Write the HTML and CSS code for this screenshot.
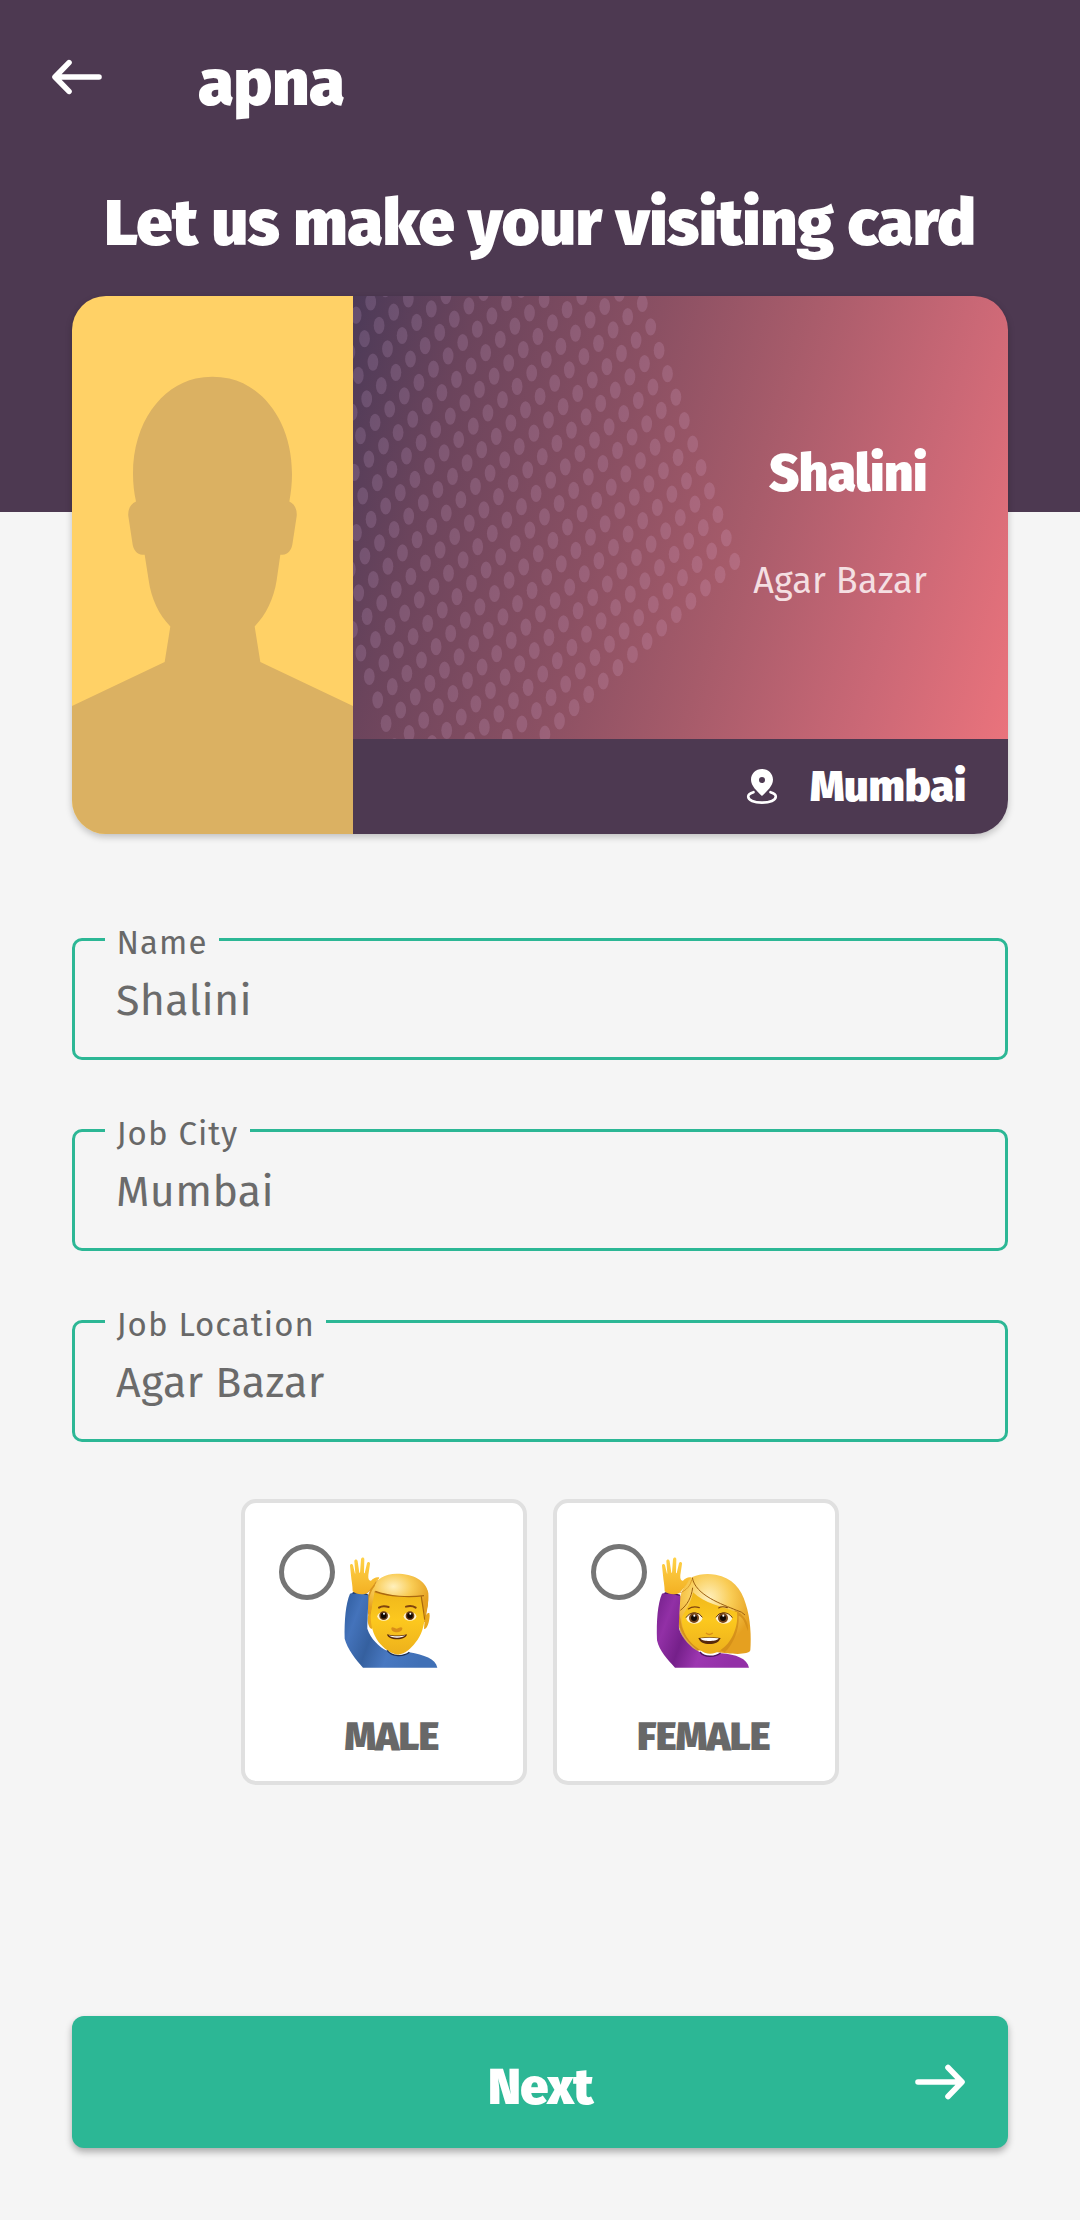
FILE: index.html
```html
<!DOCTYPE html>
<html lang="en">
<head>
<meta charset="utf-8">
<title>apna</title>
<link rel="stylesheet" href="styles.css">
</head>
<body>
<header class="hero">
  <div class="appbar">
    <svg class="back" viewBox="0 0 50 36" fill="none" stroke="#fff" stroke-width="5.6" stroke-linecap="round" stroke-linejoin="round"><path d="M47 18H4M17 3.6L3 18l14 14.4"/></svg>
    <span class="brand">apna</span>
  </div>
  <h1 class="title">Let us make your visiting card</h1>
</header>

<main class="page">
  <section class="card">
    <div class="photo">
      <svg viewBox="0 0 281 538" preserveAspectRatio="none">
        <g transform="scale(.33333 .36352) translate(-36 -44)">
          <path fill="#dbb162" d="M36 1172L314 1051L331 953C297 921 274 878 266 826L254 756H247C231 755 219 742 217 722L205 650C203 632 211 615 228 609C222 585 219 560 219 534C219 390 306 292 407 271Q457 261 508 271C609 292 696 390 696 534C696 560 693 585 688 609C703 615 712 630 710 650L698 722C696 742 684 755 668 756H661L650 826C641 878 618 921 584 953L601 1051L879 1172V1524H36Z"/>
        </g>
      </svg>
    </div>
    <div class="details">
      <div class="identity">
        <svg class="dots" id="dots" viewBox="353 296 655 443"></svg>
        <div class="person">Shalini</div>
        <div class="area">Agar Bazar</div>
      </div>
      <div class="city">
        <svg class="pin" viewBox="0 0 32 38"><path fill="#fff" fill-rule="evenodd" d="M16 1C9.700 1 5 5.600 5 11.700C5 18 11 23 16 28C21 23 27 18 27 11.700C27 5.600 22.300 1 16 1ZM16 9a3 3 0 1 1 0 6a3 3 0 0 1 0-6Z"/><path fill="none" stroke="#fff" stroke-width="2.600" stroke-linecap="round" d="M7.500 24.200C4 25.200 2.200 26.800 2.200 28.600C2.200 32.200 8 34.600 16 34.600S29.800 32.200 29.800 28.600C29.800 26.800 28 25.200 24.500 24.200"/></svg>
        <span>Mumbai</span>
      </div>
    </div>
  </section>

  <form class="form">
    <fieldset class="field"><legend>Name</legend><div class="value">Shalini</div></fieldset>
    <fieldset class="field"><legend>Job City</legend><div class="value">Mumbai</div></fieldset>
    <fieldset class="field"><legend>Job Location</legend><div class="value">Agar Bazar</div></fieldset>
  </form>

  <div class="genders">
    <div class="gender">
      <div class="pick">
        <span class="radio"></span>
        <svg class="avatar" viewBox="340 230 300 334">
          <defs>
            <linearGradient id="skin" x1="0" y1="0" x2="0" y2="1"><stop offset="0" stop-color="#f0b71b"/><stop offset=".45" stop-color="#fcc81e"/><stop offset="1" stop-color="#edb01c"/></linearGradient>
            <linearGradient id="hand" x1="0" y1="0" x2="0" y2="1"><stop offset="0" stop-color="#ffd24a"/><stop offset="1" stop-color="#f3b022"/></linearGradient>
            <radialGradient id="hair" cx=".42" cy=".3" r=".62"><stop offset="0" stop-color="#fff0bd"/><stop offset=".5" stop-color="#f9cc55"/><stop offset="1" stop-color="#e5a020"/></radialGradient>
            <linearGradient id="blue" x1="0" y1="0" x2="1" y2=".3"><stop offset="0" stop-color="#2f5c9d"/><stop offset=".2" stop-color="#4473bb"/><stop offset=".42" stop-color="#35609f"/><stop offset=".65" stop-color="#4878c1"/><stop offset="1" stop-color="#4070b6"/></linearGradient>
            <linearGradient id="purple" x1="0" y1="0" x2="1" y2=".3"><stop offset="0" stop-color="#74208b"/><stop offset=".2" stop-color="#9230a6"/><stop offset=".42" stop-color="#75208a"/><stop offset=".65" stop-color="#9c36b0"/><stop offset="1" stop-color="#932fa7"/></linearGradient>
            <g id="palm">
              <path fill="url(#hand)" d="M366 333C366 315 362 300 361 285L358 256C358 250 365 249 367 255L373 280L374 279L371 243C371 236 380 236 381 243L386 277H388L391 237C392 230 401 230 401 237L400 278L402 279L409 249C411 243 419 244 418 251L413 284C412 296 415 302 421 301C428 293 437 289 445 291C448 295 440 299 436 304C430 316 420 327 411 337C398 345 377 343 366 333Z"/>
            </g>
          </defs>
          <path fill="#d9951c" d="M412 345L420 325L440 300L590 330C594 350 594 370 588 395L585 425L424 425L412 400Z"/>
          <path fill="#e9a81d" d="M414 398C420 396 424 404 424 420V446C414 444 410 425 411 412ZM596 398C590 396 584 404 582 420L580 446C590 446 596 425 597 406Z"/>
          <path fill="url(#skin)" d="M428 336C462 348 530 352 574 347L583 404C581 438 572 466 555 486C540 506 525 520 503 523C480 521 458 503 443 484C427 462 420 436 420 405Z"/>
          <path fill="url(#hair)" d="M432 318C436 296 462 281 498 280C548 280 586 300 593 338C594 352 592 380 584 404L577 382L569 347C535 353 478 349 432 332L418 408L412 388C412 360 418 335 432 318Z"/>
          <path fill="none" stroke="#a96810" stroke-width="3.500" d="M434 333C475 349 535 352 580 346M572 349C575 372 579 390 582 418"/>
          <path fill="none" stroke="#81440e" stroke-width="6" stroke-linecap="round" d="M445 382Q456 374 474 380M526 379Q543 374 555 382"/>
          <g><ellipse cx="459" cy="408" rx="19" ry="13" fill="#fff4d0"/><ellipse cx="538" cy="408" rx="19" ry="13" fill="#fff4d0"/><circle cx="459" cy="406" r="13" fill="#6a3b14"/><circle cx="538" cy="406" r="13" fill="#6a3b14"/><circle cx="459" cy="406" r="8.500" fill="#120904"/><circle cx="538" cy="406" r="8.500" fill="#120904"/><circle cx="460" cy="400" r="3" fill="#fff"/><circle cx="539" cy="400" r="3" fill="#fff"/></g>
          <path fill="#d98e18" d="M482 443C486 438 490 444 498 445C506 444 510 438 515 443C516 452 505 456 498 456S481 452 482 443Z"/>
          <path fill="#56290c" d="M469 462C486 467 512 467 529 462C527 472 515 477 499 477S471 472 469 462Z"/><path fill="#fff" d="M474 465C488 469 510 469 524 465C520 470 510 472 499 472S478 470 474 465Z"/>
          <path fill="url(#blue)" d="M358 340C372 334 400 336 413 344C413 380 410 420 410 445C420 475 445 500 469 511C485 529 515 530 536 516C580 524 615 535 620 562H397C375 538 350 505 342 475C341 420 345 370 358 340Z"/>
          <path fill="none" stroke="#1c2f55" stroke-width="4" d="M469 510C485 530 518 530 536 516M366 338Q390 334 411 343"/>
          <use href="#palm"/>
          <path fill="none" stroke="#c9821a" stroke-width="2" d="M436 304C430 316 420 327 411 337"/>
        </svg>
      </div>
      <div class="gender-name">MALE</div>
    </div>
    <div class="gender female">
      <div class="pick">
        <span class="radio"></span>
        <svg class="avatar" viewBox="346 230 300 334">
          <path fill="url(#hair)" d="M418 350C425 325 440 300 455 290C475 281 500 279 525 283C575 292 602 325 615 370C630 415 632 470 629 510C625 523 585 522 552 518L470 510C440 485 415 455 414 420Z"/>
          <path fill="#d08b17" opacity=".75" d="M582 390C610 400 625 430 622 452C612 425 608 412 594 406C597 450 575 495 552 516L530 505C565 475 580 430 582 390ZM416 400L424 440Q440 485 478 508L466 514C436 490 414 460 414 430Z"/>
          <path fill="url(#skin)" d="M457 336C490 370 545 378 589 396C594 440 572 490 540 509C520 524 495 524 478 508C445 488 423 455 423 412C434 390 450 370 457 336Z"/>
          <path fill="none" stroke="#9b5d10" stroke-width="3" d="M455 292C464 345 545 372 588 390Q604 394 613 404M456 322C452 352 440 374 419 390"/>
          <path fill="none" stroke="#81440e" stroke-width="3.500" stroke-linecap="round" d="M443 386Q457 376 476 382M534 383Q544 376 560 382"/>
          <ellipse cx="461" cy="414" rx="24" ry="16" fill="#fff4d9"/><ellipse cx="550" cy="414" rx="24" ry="16" fill="#fff4d9"/><circle cx="460" cy="413" r="15" fill="#75431a"/><circle cx="547" cy="413" r="15" fill="#75431a"/><circle cx="460" cy="413" r="9" fill="#120904"/><circle cx="547" cy="413" r="9" fill="#120904"/><circle cx="461" cy="406" r="3.200" fill="#fff"/><circle cx="548" cy="406" r="3.200" fill="#fff"/>
          <path fill="none" stroke="#5c2f0c" stroke-width="3" d="M436 412Q445 398 462 397Q478 398 485 411M526 411Q533 398 548 397Q566 398 575 412"/>
          <path fill="none" stroke="#d98e18" stroke-width="4" stroke-linecap="round" d="M497 459Q506 466 515 459"/>
          <path fill="#56290c" d="M473 473Q506 469 540 473C534 487 523 491 506 491S479 487 473 473Z"/><path fill="#fff" d="M479 474Q506 471 534 474C528 482 518 482 506 482S485 482 479 474Z"/>
          <path fill="url(#purple)" d="M364 340C378 334 406 338 419 346C418 380 414 420 415 445C425 475 450 502 476 514C490 531 520 531 542 519C585 522 620 535 625 562H403C381 538 356 512 349 480C347 420 351 370 364 340Z"/>
          <path fill="none" stroke="#4f1362" stroke-width="4" d="M478 515C490 532 524 531 540 518M372 338Q396 337 418 345"/>
          <use href="#palm" x="6"/>
          <path fill="none" stroke="#c9821a" stroke-width="2" d="M453 298C450 315 438 330 417 338"/>
        </svg>
      </div>
      <div class="gender-name">FEMALE</div>
    </div>
  </div>

  <div class="next">
    <span class="next-label">Next</span>
    <svg class="arrow" viewBox="0 0 50 36" fill="none" stroke="#fff" stroke-width="5.600" stroke-linecap="round" stroke-linejoin="round"><path d="M3 18h43M33 3.500L47 18L33 32.500"/></svg>
  </div>
</main>
<script src="dots.js"></script>
</body>
</html>
```
FILE: styles.css
```css
* { box-sizing: border-box; }
body {
  margin: 0;
  min-height: 2220px;
  background: #f5f5f5;
  font-family: "Fira Sans", "Open Sans", "Noto Sans", sans-serif;
  color: #686868;
}
svg { display: block; }

.hero {
  height: 512px;
  padding-top: 43px;
  background: #4d3951;
  color: #fff;
}
.appbar {
  display: flex;
  align-items: center;
  height: 80px;
  padding-left: 52px;
}
.back { width: 50px; height: 36px; margin-top: -12px; }
.brand {
  margin-left: 96px;
  font-size: 65px;
  line-height: 80px;
  font-weight: 900;
  letter-spacing: -.3px;
}
.title {
  margin: 60px 0 0;
  font-size: 65px;
  line-height: 80px;
  font-weight: 900;
  letter-spacing: -.45px;
  text-align: center;
  white-space: nowrap;
}

.page { padding: 0 72px; margin-top: -216px; }

.card {
  display: flex;
  height: 538px;
  border-radius: 34px;
  overflow: hidden;
  box-shadow: 0 3px 7px rgba(0, 0, 0, .22);
  color: #fff;
}
.photo { width: 281px; background: #ffd166; }
.photo svg { width: 281px; height: 538px; }
.details { flex: 1; display: flex; flex-direction: column; }
.identity {
  position: relative;
  height: 443px;
  padding: 148px 81px 0 0;
  text-align: right;
  background: linear-gradient(106deg, #4c3a58 0%, #6b445c 16%, #8b5063 40%, #a65b6a 58%, #cb6876 81%, #ea737c 100%);
}
.dots { position: absolute; inset: 0; width: 655px; height: 443px; }
.person {
  position: relative;
  font-size: 51.5px;
  line-height: 60px;
  font-weight: 900;
  letter-spacing: -.5px;
}
.area {
  position: relative;
  margin-top: 52px;
  font-size: 36px;
  line-height: 50px;
  letter-spacing: .2px;
  color: #f4dfe2;
}
.city {
  flex: 1;
  display: flex;
  align-items: center;
  justify-content: flex-end;
  gap: 32px;
  padding-right: 42px;
  background: #4d3951;
  font-size: 43.5px;
  line-height: 60px;
  font-weight: 900;
  letter-spacing: -.2px;
}
.pin { width: 32px; height: 38px; }

.form { display: flex; flex-direction: column; gap: 51px; margin-top: 86px; }
.field {
  height: 140px;
  margin: 0;
  min-width: 0;
  padding: 13.5px 30px 0;
  border: 3px solid #2cb795;
  border-radius: 10px;
}
.field legend {
  padding: 7px 11.5px 0 11.5px;
  font-size: 33px;
  line-height: 32px;
  letter-spacing: 1.05px;
}
.value {
  padding-left: 11px;
  font-size: 43px;
  line-height: 56px;
  letter-spacing: .35px;
  color: #6b6b6b;
}

.genders { display: flex; justify-content: center; gap: 26px; margin-top: 57px; }
.gender {
  width: 286px;
  height: 286px;
  border: 4px solid #e0e0e0;
  border-radius: 15px;
  background: #fff;
}
.pick { display: flex; gap: 9px; padding: 41px 0 0 33.5px; }
.radio {
  width: 56px;
  height: 56px;
  border: 5.5px solid #757575;
  border-radius: 50%;
}
.avatar { width: 100px; height: 111.330px; margin-top: 12.5px; }
.gender-name {
  margin-top: 44px;
  padding-left: 15px;
  font-size: 40px;
  line-height: 50px;
  font-weight: 900;
  letter-spacing: -.8px;
  text-align: center;
}

.next {
  display: grid;
  grid-template-columns: 1fr auto 1fr;
  align-items: center;
  height: 132px;
  margin-top: 231px;
  padding-right: 43px;
  padding-left: 44px;
  border-radius: 12px;
  background: #2cb795;
  box-shadow: 0 4px 7px rgba(0, 0, 0, .3);
  color: #fff;
}
.next-label {
  grid-column: 2;
  padding-top: 9px;
  font-size: 50.5px;
  line-height: 60px;
  font-weight: 900;
  letter-spacing: -.5px;
}
.arrow { width: 50px; height: 36px; justify-self: end; }
```
FILE: dots.js
```js
// Slanted lattice of dots behind the name, starting at its right-hand tip.
const dots = document.getElementById('dots');
let marks = '';
for (let j = 0; j < 22; j++) {
  for (let i = 0; i < 40; i++) {
    const x = 734.7 - 8.4 * i - 14.6 * j;
    const y = 561.3 - 23.45 * i + 13.3 * j;
    if (x < 345 || y < 285 || y > 750) continue;
    marks += `<ellipse cx="${x.toFixed(1)}" cy="${y.toFixed(1)}" rx="5.4" ry="8.6"/>`;
  }
}
dots.innerHTML = `<g fill="rgba(248,208,255,.14)">${marks}</g>`;
```
